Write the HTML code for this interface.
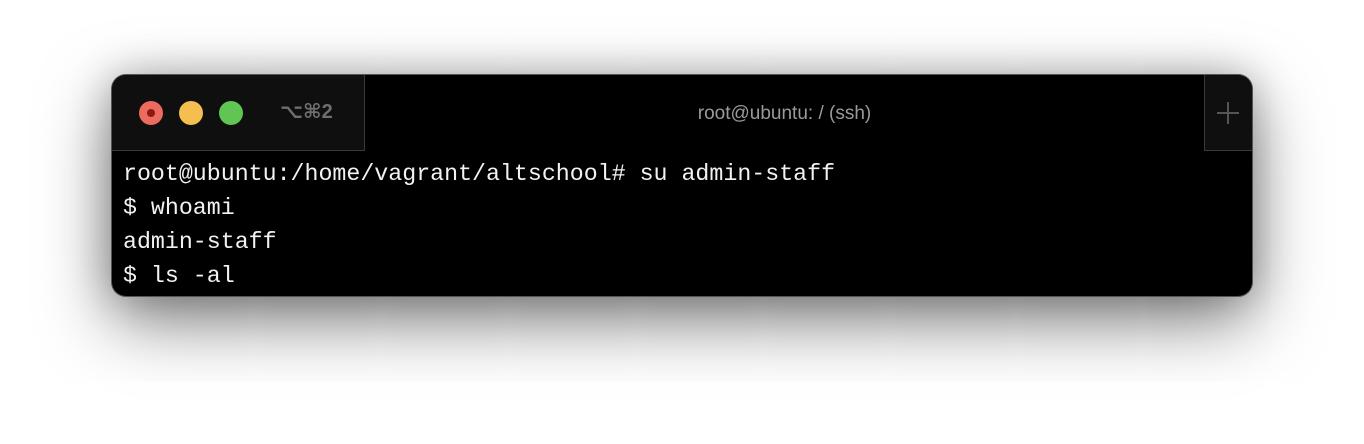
<!DOCTYPE html>
<html><head><style>
html,body{margin:0;padding:0;background:#fff;width:1364px;height:444px;overflow:hidden}
.win{position:absolute;left:112px;top:75px;width:1140px;height:221px;background:#000;border-radius:14px;box-shadow:0 0 0 1px #555,0 25px 70px rgba(0,0,0,.5),0 0 40px rgba(0,0,0,.25);overflow:hidden}
.tab1{position:absolute;left:0;top:0;width:253px;height:76px;background:#0f0f0f;border-right:1px solid #3a3a3a;border-bottom:1px solid #3a3a3a;box-sizing:border-box}
.tab2{position:absolute;right:0;top:0;width:48px;height:76px;background:#0f0f0f;border-left:1px solid #3a3a3a;border-bottom:1px solid #3a3a3a;box-sizing:border-box}
.dot{position:absolute;top:26px;width:24px;height:24px;border-radius:50%}
.title{position:absolute;left:253px;right:48px;top:0;height:76px;text-align:center;color:#9a9a9a;font-family:"Liberation Sans",sans-serif;font-size:19px;line-height:78px}
.kbd{position:absolute;left:168px;top:24px;color:#6e6e6e;font:bold 20px "Liberation Sans","DejaVu Sans",sans-serif}
.term{position:absolute;left:11px;top:82px;color:#f2f2f2;font-family:"Liberation Mono",monospace;font-size:23.27px;line-height:34px;white-space:pre}
</style></head><body>
<div class="win">
<div class="tab1">
<div class="dot" style="left:27px;background:#ec6a5e"><div style="position:absolute;left:8px;top:8px;width:8px;height:8px;border-radius:50%;background:#8c1a10"></div></div>
<div class="dot" style="left:67px;background:#f4bf4f"></div>
<div class="dot" style="left:107px;background:#61c554"></div>
<div class="kbd">⌥⌘2</div>
</div>
<div class="title">root@ubuntu: / (ssh)</div>
<div class="tab2"><div style="position:absolute;left:12px;top:37px;width:22px;height:2px;background:#555"></div><div style="position:absolute;left:22px;top:27px;width:2px;height:22px;background:#555"></div></div>
<div class="term">root@ubuntu:/home/vagrant/altschool# su admin-staff
$ whoami
admin-staff
$ ls -al</div>
</div>
</body></html>
